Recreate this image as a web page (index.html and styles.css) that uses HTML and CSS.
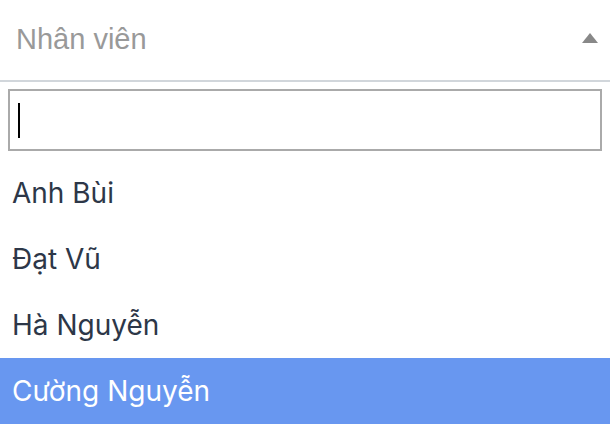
FILE: index.html
```html
<!DOCTYPE html>
<html lang="vi">
<head>
<meta charset="utf-8">
<link rel="stylesheet" href="styles.css">
</head>
<body>
<div class="select">
  <div class="selection">
    <span class="placeholder">Nhân viên</span>
    <span class="arrow"></span>
  </div>
  <div class="dropdown">
    <div class="search">
      <div class="field">
        <input class="input" type="text" aria-label="Tìm kiếm">
        <span class="caret"></span>
      </div>
    </div>
    <ul class="results">
      <li class="option">Anh Bùi</li>
      <li class="option">Đạt Vũ</li>
      <li class="option">Hà Nguyễn</li>
      <li class="option active">Cường Nguyễn</li>
    </ul>
  </div>
</div>
</body>
</html>
```
FILE: styles.css
```css
* { box-sizing: border-box; }
html, body { margin: 0; padding: 0; background: #fff; }
body { width: 610px; height: 424px; overflow: hidden; }
.select {
  width: 610px;
}
.selection {
  height: 82px;
  display: flex;
  align-items: center;
  justify-content: space-between;
  padding: 0 12px 0 16px;
  border-bottom: 2px solid #d1d6db;
}
.placeholder {
  font-family: "Liberation Sans", Arial, sans-serif;
  font-size: 29px;
  color: #999;
  margin-top: -2px;
}
.arrow {
  width: 0; height: 0;
  border-left: 8px solid transparent;
  border-right: 8px solid transparent;
  border-bottom: 10px solid #888;
  margin-top: -4px;
}
.search { padding: 7px 8px 9px 8px; }
.field { position: relative; }
.input {
  display: block;
  width: 100%;
  height: 62px;
  border: 2px solid #aaa;
  outline: none;
  margin: 0;
  padding: 0 8px;
  font-size: 24px;
  background: #fff;
  caret-color: transparent;
}
.caret {
  position: absolute;
  left: 10px;
  top: 14px;
  width: 2px;
  height: 35px;
  background: #000;
}
.results { list-style: none; margin: 0; padding: 0; }
.option {
  height: 66px;
  display: flex;
  align-items: center;
  padding: 0 12px;
  font-family: Inter, "Noto Sans", sans-serif;
  font-size: 28px;
  color: #2d3748;
}
.option.active { background: #6897f0; color: #fff; }
```
